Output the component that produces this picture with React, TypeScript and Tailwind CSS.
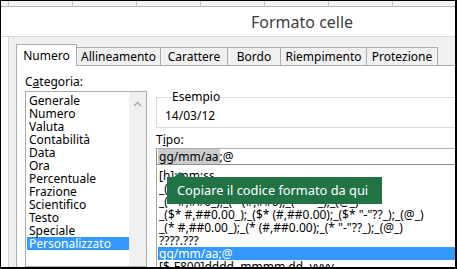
import React from 'react';

const CATEGORIES = [
  'Generale',
  'Numero',
  'Valuta',
  'Contabilità',
  'Data',
  'Ora',
  'Percentuale',
  'Frazione',
  'Scientifico',
  'Testo',
  'Speciale',
  'Personalizzato',
];

const FORMATS = [
  '[h]:mm:ss',
  '_($* #,##0_);_($* (#,##0);_($* "-"_);_(@_)',
  '_(* #,##0_);_(* (#,##0);_(* "-"_);_(@_)',
  '_($* #,##0.00_);_($* (#,##0.00);_($* "-"??_);_(@_)',
  '_(* #,##0.00_);_(* (#,##0.00);_(* "-"??_);_(@_)',
  '????.???',
  'gg/mm/aa;@',
  '[$-F800]dddd, mmmm dd, yyyy',
];

const TABS = [
  { label: 'Numero', w: 'w-[61px]' },
  { label: 'Allineamento', w: 'w-[84px]' },
  { label: 'Carattere', w: 'w-[67px]' },
  { label: 'Bordo', w: 'w-[53px]' },
  { label: 'Riempimento', w: 'w-[86px]' },
  { label: 'Protezione', w: 'w-[71px]' },
];

const font = "font-['Noto_Sans',Arial,sans-serif]";

export default function App() {
  return (
    <div className={`relative w-[457px] h-[269px] overflow-hidden bg-white border-l border-t border-r-2 border-b-2 border-black flex flex-col ${font} text-[12px] text-black`}>
      {/* spreadsheet column headers peeking above the dialog */}
      <div className="h-[6px] shrink-0 flex bg-[#f4f4f4] border-b border-[#b9b9b9]">
        <div className="w-[8px] shrink-0 border-r border-[#c8c8c8]" />
        {[0, 1, 2, 3, 4, 5, 6].map((i) => (
          <div key={i} className="w-[64px] shrink-0 border-r border-[#c8c8c8]" />
        ))}
      </div>

      {/* title bar */}
      <div className="h-[30px] shrink-0 border-b border-[#dadada] flex items-center pl-[250px]">
        <span className="text-[16px] text-[#404040] leading-none">Formato celle</span>
      </div>

      {/* dialog body */}
      <div className="flex-1 ml-[7px] bg-[#f0f0f0] border-l border-[#d4d4d4] pt-[7px] pl-[7px] flex flex-col min-h-0">
        <div className="flex items-end h-[21px] shrink-0">
          {TABS.map((t, i) =>
            i === 0 ? (
              <div
                key={t.label}
                className={`${t.w} h-[22px] -mb-px relative z-10 bg-white border border-b-0 border-[#adadad] flex items-center justify-center text-[12px] text-black`}
              >
                {t.label}
              </div>
            ) : (
              <div
                key={t.label}
                className={`${t.w} h-[18px] bg-[#f0f0f0] border-t border-r border-[#adadad] flex items-center justify-center text-[12px] text-black`}
              >
                {t.label}
              </div>
            )
          )}
        </div>

        <div className="flex-1 bg-white border-t border-l border-[#adadad] pl-[8px] pt-[9px] flex gap-[9px] min-h-0">
          {/* left column */}
          <div className="w-[122px] shrink-0 flex flex-col">
            <div className="leading-[14px] h-[14px]">
              C<span className="underline">a</span>tegoria:
            </div>
            <div className="mt-[2px] flex-1 border border-[#acacac] flex">
              <div className="flex-1 pl-[1px] pt-[2px]">
                {CATEGORIES.map((c) => (
                  <div
                    key={c}
                    className={`h-[13px] leading-[13px] pl-[2px] whitespace-nowrap ${
                      c === 'Personalizzato' ? 'bg-[#3399ff] text-white' : ''
                    }`}
                  >
                    {c}
                  </div>
                ))}
              </div>
              <div className="w-[17px] bg-[#f0f0f0] flex justify-center pt-[9px]">
                <svg width="9" height="6" viewBox="0 0 9 6">
                  <polyline points="1,5 4.5,1.5 8,5" fill="none" stroke="#a6a6a6" strokeWidth="1.4" />
                </svg>
              </div>
            </div>
          </div>

          {/* right column */}
          <div className="flex-1 flex flex-col min-w-0 -mr-[20px] pt-[15px]">
            <fieldset className="border border-[#dcdcdc] pl-[8px] pt-[5px] pb-[4px] min-w-0">
              <legend className="ml-[6px] px-[1px] leading-[14px] text-black">Esempio</legend>
              <div className="leading-[14px]">14/03/12</div>
            </fieldset>
            <div className="mt-[5px] leading-[14px] h-[14px]">
              T<span className="underline">i</span>po:
            </div>
            <div className="mt-px h-[21px] border border-[#8f8f8f] border-t-[#acacac] flex items-center pl-[1px]">
              <span className="bg-[#cccccc] px-[1px] leading-[15px]">gg/mm/aa</span>
              <span className="leading-[15px]">;@</span>
            </div>
            <div className="flex-1 border-l border-[#acacac] pl-[1px] pt-[4px]">
              {FORMATS.map((f) => (
                <div
                  key={f}
                  className={`h-[13px] leading-[13px] pl-[1px] whitespace-nowrap ${
                    f === 'gg/mm/aa;@' ? 'bg-[#3399ff] text-white' : ''
                  }`}
                >
                  {f}
                </div>
              ))}
            </div>
          </div>
        </div>
      </div>

      {/* tooltip */}
      <div className="absolute z-20 left-[166px] top-[176px] h-[27px] bg-[#217346] flex items-center pl-[10px] pr-[14px] text-white text-[12.8px] whitespace-nowrap">
        <span>Copiare il codice formato da qui</span>
        <div className="absolute left-[7px] -top-[5px] w-0 h-0 border-l-[6px] border-r-[6px] border-b-[5px] border-l-transparent border-r-transparent border-b-[#217346]" />
      </div>
    </div>
  );
}
